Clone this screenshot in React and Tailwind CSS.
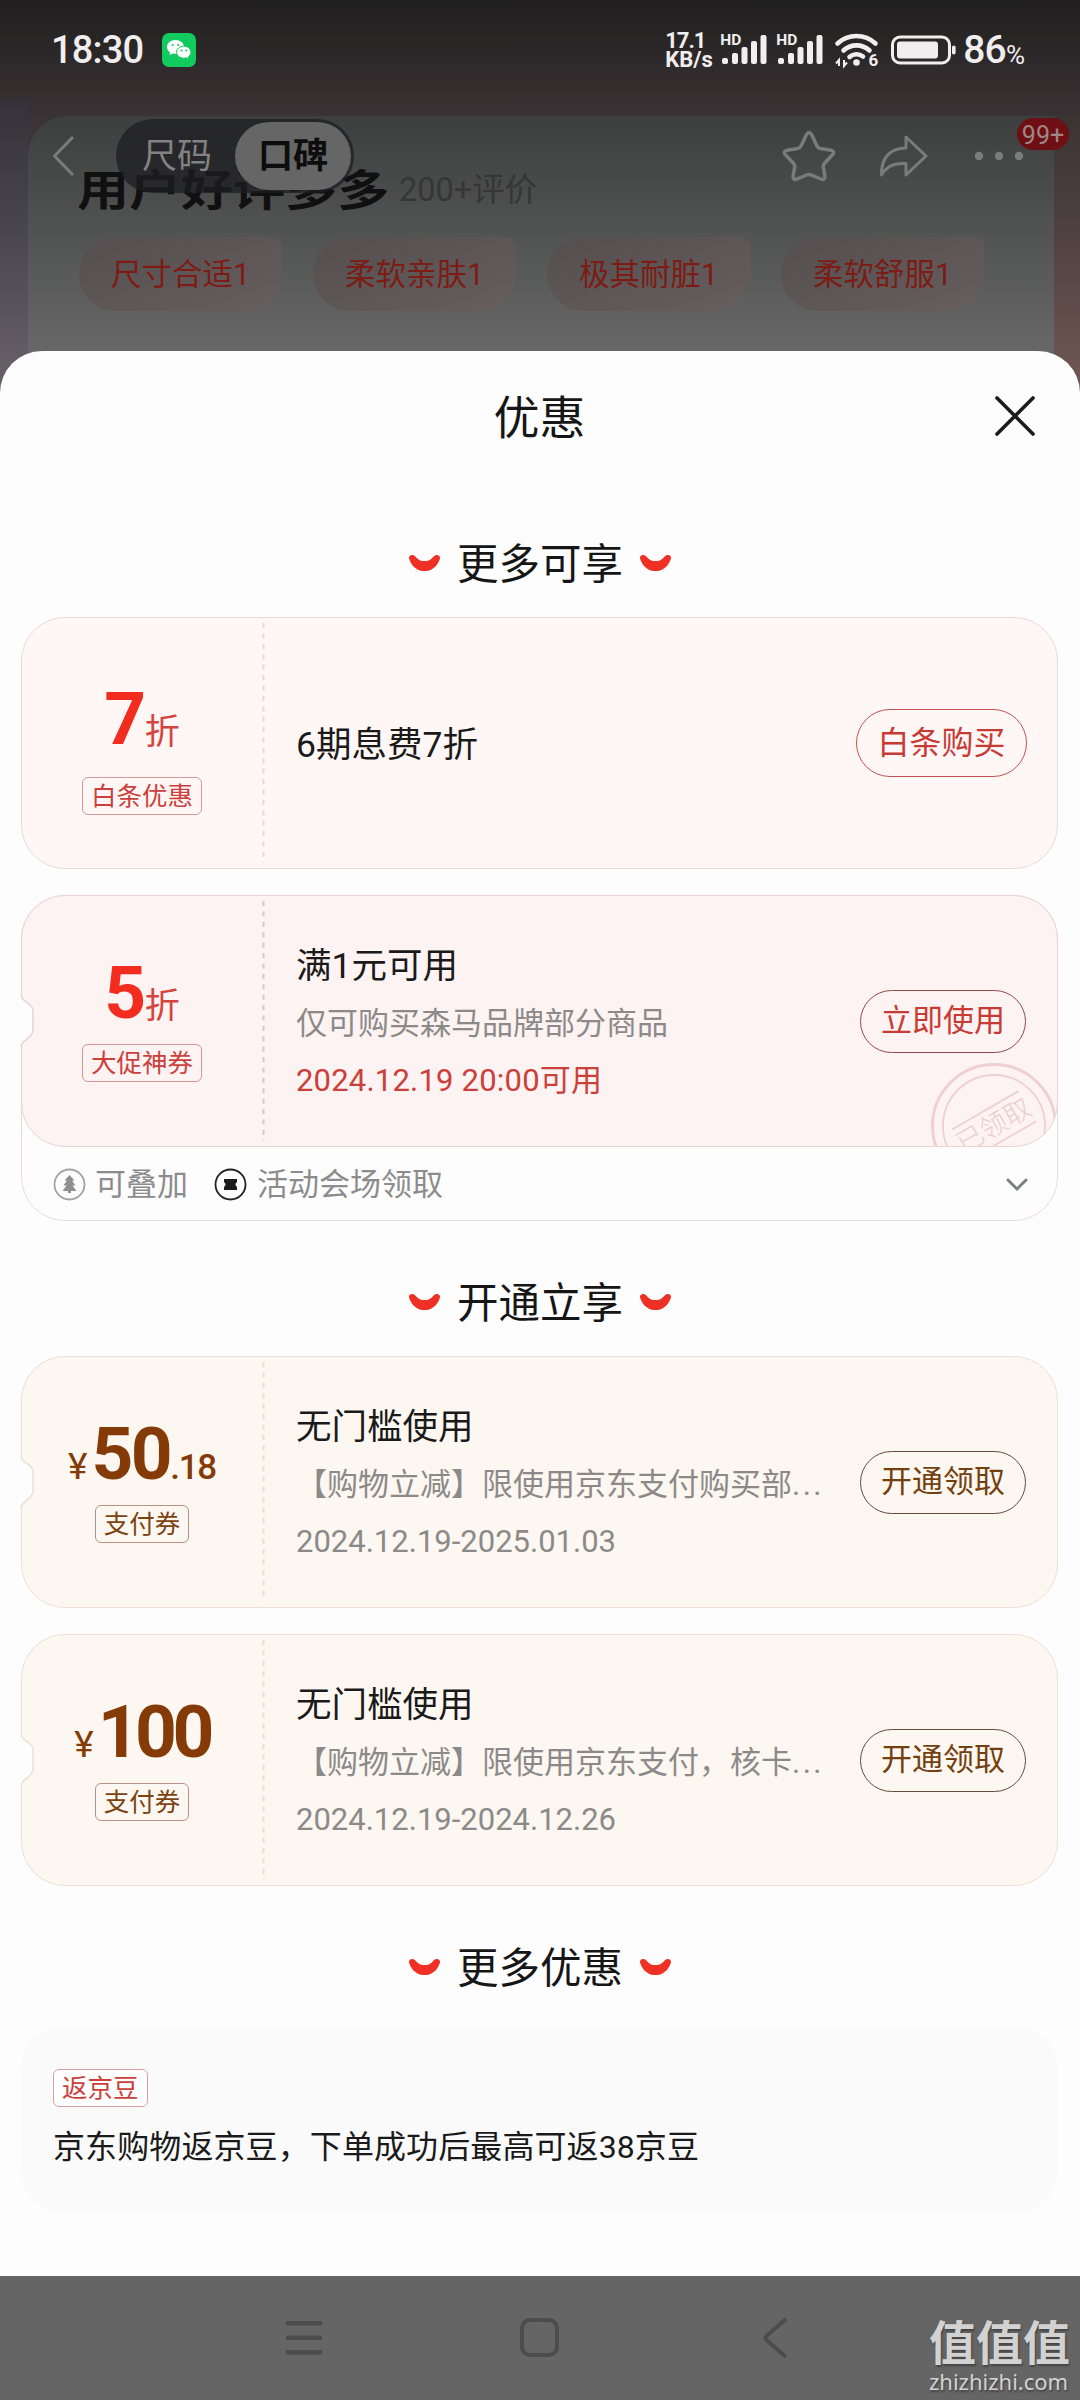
const reviewTags = ['尺寸合适1', '柔软亲肤1', '极其耐脏1', '柔软舒服1'];

const tones = {
  pink: {
    card: 'bg-[#fff6f6] border-[#ecd9d9]',
    stroke: '#e6cfd0',
    dash: 'text-[#f5d3d3]',
    price: 'text-[#f22d1f]',
    unit: 'text-[#d5443e]',
    tag: 'border-[#d49a9a] text-[#cc403b]',
    button: 'border-[#c4534f] text-[#c83a34]',
  },
  rose: {
    card: 'bg-[#fdf3f2] border-[#ead3d2]',
    stroke: '#e8d3d2',
    dash: 'text-[#e3c4c4]',
    price: 'text-[#f22d1f]',
    unit: 'text-[#d5443e]',
    tag: 'border-[#cf9796] text-[#cc403b]',
    button: 'border-[#93474a] text-[#c83a34]',
  },
  gold: {
    card: 'bg-[#fdf7f1] border-[#f0dfd0]',
    stroke: '#efe0cf',
    dash: 'text-[#f3dcc8]',
    price: 'text-[#853b08]',
    unit: 'text-[#7c430f]',
    tag: 'border-[#b89084] text-[#7c430f]',
    button: 'border-[#654a3c] text-[#74400f]',
  },
};

function Signal() {
  return (
    <div className="relative h-[34px] w-[48px]">
      <span className="absolute left-0 -top-px text-[15.500px] leading-[16px] font-bold">HD</span>
      <svg className="absolute left-[2px] top-[2px]" width="45" height="30" viewBox="0 0 45 30" fill="currentColor">
        <rect x="0" y="23" width="6" height="6" rx="2" />
        <rect x="10" y="18" width="6" height="11" rx="2" />
        <rect x="19.500" y="12" width="6" height="17" rx="2" />
        <rect x="29" y="6" width="6" height="23" rx="2" />
        <rect x="38.500" y="0" width="6" height="29" rx="2" />
      </svg>
    </div>
  );
}

function StatusBar() {
  return (
    <div className="absolute inset-x-0 top-0 h-[100px] flex items-center pl-[51px] pr-[55px] text-[#f0eeee]">
      <span className="text-[38px] leading-[40px] font-medium tracking-[-0.8px] w-[111px]">18:30</span>
      <svg width="34" height="34" viewBox="0 0 34 34">
        <rect width="34" height="34" rx="7" fill="#11cb5e" />
        <path d="M13.500 7C8.800 7 5 10.100 5 14c0 2.200 1.200 4.100 3.100 5.400L7.500 22l3-1.600c1 .3 2 .4 3 .4 4.700 0 8.500-3 8.500-6.800S18.200 7 13.500 7z" fill="#fff" />
        <path d="M21.800 13.200c-4 0-7.200 2.700-7.200 6s3.200 6 7.200 6c.9 0 1.700-.1 2.500-.4l2.600 1.400-.6-2.400c1.600-1.100 2.600-2.700 2.600-4.600 0-3.300-3.200-6-7.100-6z" fill="#fff" stroke="#11cb5e" />
        <g fill="#11cb5e">
          <circle cx="10.700" cy="12" r="1.100" />
          <circle cx="16.200" cy="12" r="1.100" />
          <circle cx="19.500" cy="17.500" r="1" />
          <circle cx="24.200" cy="17.500" r="1" />
        </g>
      </svg>
      <div className="ml-auto flex items-center">
        <div className="w-[55px] text-[22px] leading-[19px] font-bold">
          <p className="tracking-[-1px]">17.1</p>
          <p>KB/s</p>
        </div>
        <Signal />
        <div className="w-2" />
        <Signal />
        <svg className="ml-[11px] overflow-visible" width="46" height="35" viewBox="0 0 46 35" fill="none" stroke="currentColor" strokeWidth="4.600" strokeLinecap="round">
          <path d="M2.500 10.500a28 28 0 0 1 38 0" />
          <path d="M8.500 17.500a19 19 0 0 1 26 0" />
          <path d="M14.500 24a10.500 10.500 0 0 1 13.500-.5" />
          <circle cx="21.500" cy="29.500" r="2.300" fill="currentColor" strokeWidth="2" />
          <path d="M4 33v-6l-3 3.500M9 27v6l3-3.500" strokeWidth="2" strokeLinecap="butt" />
          <text x="33.500" y="33" fontSize="17" fontWeight="700" fill="currentColor" stroke="none">6</text>
        </svg>
        <svg className="ml-[9px]" width="68" height="32" viewBox="0 0 68 32" fill="none">
          <rect x="2.500" y="3" width="57" height="26" rx="7.500" stroke="currentColor" strokeWidth="3" />
          <rect x="7" y="7.500" width="41" height="17" rx="3" fill="currentColor" />
          <rect x="62" y="11.500" width="3.600" height="9" rx="1.800" fill="currentColor" />
        </svg>
        <span className="ml-[5px] text-[39px] leading-[40px] font-medium tracking-[-0.8px]">86</span>
        <span className="pt-[9px] text-[26px] leading-[30px]">%</span>
      </div>
    </div>
  );
}

function ProductPage() {
  return (
    <div className="relative h-[400px] shrink-0 bg-linear-to-b from-[#201f1f] via-[#3b3335] via-30% to-[#67555a]">
      <div className="absolute bottom-0 top-[100px] left-0 w-[28px] bg-linear-to-b from-[#353339] via-[#48444c] via-40% to-[#665f68] to-90%" />
      <div className="absolute bottom-0 top-[116px] right-0 w-[26px] bg-linear-to-b from-[#3b3332] via-[#4f4141] via-40% to-[#6d5651] to-90%" />
      <div className="absolute left-[28px] top-[116px] w-[1026px] h-[284px] rounded-tl-[40px] bg-linear-to-b from-[#3d3f3e] to-[#666666] to-80% pl-[51px]">
        <div className="flex items-start pt-[50px]">
          <h2 className="w-[320px] h-[50px] whitespace-nowrap text-[43px] leading-[50px] font-bold text-[#101010]">
            <span className="inline-block origin-left -translate-x-[2px] scale-x-[1.21]">用户好评多多</span>
          </h2>
          <span className="text-[32.500px] leading-[49px] text-[#363636]">200+评价</span>
        </div>
        <div className="mt-[21px] flex gap-[31px]">
          {reviewTags.map((tag) => (
            <div key={tag} className="w-[203px] h-[74px] rounded-l-[37px] rounded-br-[37px] rounded-tr-[10px] bg-linear-to-br from-[#544e50] to-[#675e5d] text-center text-[30.500px] leading-[75px] text-[#7c1c14]">
              {tag}
            </div>
          ))}
        </div>
      </div>

      {/* floating nav over the scrolled review card */}
      <div className="absolute inset-x-0 top-[119px] h-[74px] flex items-center pl-[51px] text-[#7b7b7b]">
        <svg width="24" height="42" viewBox="0 0 24 42" fill="none" stroke="currentColor" strokeWidth="3">
          <path d="M22 2L3.500 21 22 40" />
        </svg>
        <div className="ml-[41px] w-[238px] h-[74px] rounded-full bg-[#1d1e23]/75 flex items-center pl-[26px] pr-[3px] text-[35px]">
          <span className="w-[93px] leading-[71px] text-[#828282]">尺码</span>
          <span className="w-[116px] h-[68px] rounded-full bg-[#666666] text-center leading-[69px] font-bold text-[#0d0d0d]">口碑</span>
        </div>
        <svg className="ml-[427px]" width="56" height="54" viewBox="0 0 56 54" fill="none" stroke="currentColor" strokeWidth="3.500" strokeLinejoin="round">
          <path d="M25.500 5.500q2.500-4 5 0l5.500 11.500q1 2 3 2.400l11 1.800q4.500 1.200 1.500 4.600l-8 8.500q-1.400 1.600-1.200 3.700l1.600 9q.2 4.500-4 3l-9.600-4q-2.300-1-4.600 0l-9.600 4q-4.200 1.500-4-3l1.600-9q.2-2.100-1.200-3.700l-8-8.500q-3-3.400 1.500-4.600l11-1.800q2-.4 3-2.400z" />
        </svg>
        <svg className="ml-[42px]" width="50" height="44" viewBox="0 0 50 44" fill="none" stroke="currentColor" strokeWidth="3" strokeLinejoin="round">
          <path d="M27 3L47 22 27 41V29.500C15 29 8 32 2.500 41 2 24 11 14 27 14z" />
        </svg>
        <svg className="ml-[45px]" width="50" height="10" viewBox="0 0 50 10" fill="currentColor">
          <circle cx="5" cy="5" r="4.200" />
          <circle cx="25" cy="5" r="4.200" />
          <circle cx="45" cy="5" r="4.200" />
        </svg>
        <span className="absolute left-[1017px] -top-px w-[52px] h-[32px] rounded-full bg-[#6e1013] text-center text-[25px] leading-[35px] text-[#a08585]">99+</span>
      </div>
      <StatusBar />
    </div>
  );
}

function Smile() {
  return (
    <svg width="33" height="20" viewBox="0 0 34 20" fill="#ee3124">
      <path d="M1.200 5.800C0 2 5 0 8 3.700 12.500 9.500 21.500 9.500 26 3.700 29 0 34 2 32.800 5.800 27.500 22.500 6.500 22.500 1.200 5.800z" />
    </svg>
  );
}

function SectionTitle({ children, className }) {
  return (
    <div className={`flex items-center justify-center gap-[16px] h-[60px] pl-px ${className}`}>
      <Smile />
      <h3 className="pt-[3px] text-[41.500px] leading-[60px] text-[#161616]">{children}</h3>
      <Smile />
    </div>
  );
}

function Notch({ stroke }) {
  return (
    <svg className="absolute -left-[2px] top-[99px]" width="15" height="52" viewBox="0 0 15 52">
      <path d="M0 1h2C2 8 13 7 13 16V35C13 44 2 43 2 51H0z" fill="#fdfdfd" />
      <path d="M1.200 0C1.200 8 13 7 13 16V35C13 44 1.200 44 1.200 52" fill="none" stroke={stroke} strokeWidth="1.500" />
    </svg>
  );
}

function Stamp() {
  return (
    <div className="absolute inset-0 rounded-[42px] overflow-hidden">
      <svg className="absolute left-[907px] top-[165px]" width="130" height="130" viewBox="0 0 130 130" fill="none" stroke="#efd0d1">
        <circle cx="65" cy="65" r="61.500" strokeWidth="3" />
        <circle cx="65" cy="65" r="51" strokeWidth="1.800" />
        <g transform="rotate(-30 65 65)">
          <path d="M27 47h77M27 82h77" strokeWidth="1.800" />
          <text x="65" y="74" textAnchor="middle" fontSize="27" fontWeight="300" fill="#eccdce" stroke="none">已领取</text>
        </g>
      </svg>
    </div>
  );
}

function Coupon({ tone, prefix, amount, unit, cents, tag, title, desc, clipped, date, dateClass = 'text-[#8c8a89]', action, notch, stamp, wide, className = '' }) {
  const t = tones[tone];
  return (
    <div className={`relative h-[252px] rounded-[44px] border-[1.500px] flex ${t.card} ${className}`}>
      {notch && <Notch stroke={t.stroke} />}
      {stamp && <Stamp />}
      <div className={`w-[240px] shrink-0 flex flex-col items-center ${wide ? 'pt-[70px]' : 'pt-[66px]'}`}>
        <div className={`flex items-baseline h-[62px] leading-[62px] ${t.price}`}>
          {prefix && <span className="text-[37px] mr-[4px]">{prefix}</span>}
          <span className={`text-[73px] font-bold ${amount.length > 2 ? 'tracking-[-4.500px]' : 'tracking-[-2.500px]'}`}>{amount}</span>
          {unit && <span className={`text-[35px] ml-[1px] ${t.unit}`}>{unit}</span>}
          {cents && <span className="text-[35px] tracking-[-1.2px] font-medium">{cents}</span>}
        </div>
        <span className={`h-[38px] rounded-[6px] border-[1.500px] px-[8px] text-[25.500px] leading-[36px] ${wide ? 'mt-[27px]' : 'mt-[20px]'} ${t.tag}`}>{tag}</span>
      </div>
      <svg className={`shrink-0 my-[5px] ${t.dash}`} width="3" height="240" viewBox="0 0 3 240">
        <path d="M1.500 0V240" stroke="currentColor" strokeWidth="2" strokeDasharray="5.200 5.200" />
      </svg>
      <div className="ml-[31px] pt-[4px] flex-1 min-w-0 flex flex-col justify-center whitespace-nowrap">
        <p className="text-[35.500px] leading-[58px] text-[#1a1a1a]">{title}</p>
        {desc && (
          <p className="text-[31px] leading-[58px] text-[#8c8a89]">
            {desc}
            {clipped && <span className="tracking-[2.500px]">...</span>}
          </p>
        )}
        {date && <p className={`text-[31px] leading-[56px] ${dateClass}`}>{date}</p>}
      </div>
      <div className={`self-center shrink-0 rounded-full border-[1.500px] text-center ${t.button} ${wide ? 'w-[171px] h-[68px] mr-[30px] text-[32px] leading-[66px]' : 'w-[166px] h-[63px] mr-[31px] text-[31px] leading-[60px]'}`}>
        {action}
      </div>
    </div>
  );
}

function CouponFooter() {
  return (
    <div className="h-[73px] flex items-center pt-[4px] pl-[31px] pr-[28px] text-[31px] leading-[46px] text-[#8c8c8c]">
      <svg width="33" height="33" viewBox="0 0 33 33" fill="none">
        <circle cx="16.500" cy="16.500" r="15" stroke="#a3a3a3" strokeWidth="1.800" />
        <path d="M16.500 7l5 5.500h-2.500l3.500 5h-3l4 5.500H18v2h-3v-2H9.500l4-5.500h-3l3.500-5h-2.500z" fill="#8f8f8f" />
      </svg>
      <span className="ml-[9px]">可叠加</span>
      <svg className="ml-[26px]" width="33" height="33" viewBox="0 0 33 33" fill="none">
        <circle cx="16.500" cy="16.500" r="15" stroke="#222" strokeWidth="1.800" />
        <path d="M10 11h13v3q-3 2.500 0 5v3H10v-3q3-2.500 0-5z" fill="#1c1c1c" />
      </svg>
      <span className="ml-[10px]">活动会场领取</span>
      <svg className="ml-auto" width="24" height="14" viewBox="0 0 24 14" fill="none" stroke="#7d7f80" strokeWidth="3" strokeLinecap="round">
        <path d="M3 2l9 9 9-9" />
      </svg>
    </div>
  );
}

function NavBar() {
  return (
    <div className="relative h-[124px] shrink-0 bg-[#656565] text-[#4c4c4c]">
      <div className="flex items-center pt-[40px] pl-[284px]">
        <svg width="40" height="44" viewBox="0 0 40 44" fill="currentColor">
          <rect x="2" y="5" width="36" height="4.500" rx="1" />
          <rect x="2" y="19.500" width="36" height="4.500" rx="1" />
          <rect x="2" y="34" width="36" height="4.500" rx="1" />
        </svg>
        <svg className="ml-[194px]" width="44" height="44" viewBox="0 0 44 44" fill="none" stroke="currentColor" strokeWidth="4">
          <rect x="4" y="4" width="35" height="35" rx="8" />
        </svg>
        <svg className="ml-[198px]" width="30" height="44" viewBox="0 0 30 44" fill="none" stroke="currentColor" strokeWidth="4">
          <path d="M26 3L6.500 20q-2 2 0 4L26 41" />
        </svg>
      </div>
      <div className="absolute left-[929px] top-[41px] w-[146px] whitespace-nowrap text-[#d2d2d2] [text-shadow:1px_2px_2px_#444]">
        <p className="text-[47px] leading-[54px] font-bold">值值值</p>
        <p className="text-[22px] leading-[21px] font-['Noto_Sans']">zhizhizhi.com</p>
      </div>
    </div>
  );
}

export default function App() {
  return (
    <div className="w-[1080px] h-[2400px] overflow-hidden flex flex-col bg-[#656565] font-['Roboto','Noto_Sans_CJK_SC',sans-serif]">
      <ProductPage />
      <main className="relative -mt-[49px] h-[1925px] shrink-0 rounded-t-[42px] bg-[#fdfdfd] pl-[21px] pr-[22px]">
        <header className="relative h-[130px] flex items-center justify-center">
          <h1 className="pt-[4px] text-[46px] leading-[60px] text-[#161616]">优惠</h1>
          <svg className="absolute right-[22px] top-[44px]" width="42" height="42" viewBox="0 0 42 42" stroke="#1b1b1b" strokeWidth="3.600" strokeLinecap="round">
            <path d="M3 3l36 36M39 3L3 39" />
          </svg>
        </header>

        <SectionTitle className="mt-[52px]">更多可享</SectionTitle>
        <Coupon className="mt-[24px]" tone="pink" amount="7" unit="折" tag="白条优惠" title="6期息费7折" action="白条购买" wide />
        <div className="mt-[26px] h-[326px] rounded-[44px] border-[1.500px] border-[#eadcdc]">
          <Coupon
            className="-m-px"
            tone="rose"
            amount="5"
            unit="折"
            tag="大促神券"
            title="满1元可用"
            desc="仅可购买森马品牌部分商品"
            date="2024.12.19 20:00可用"
            dateClass="text-[#cc403b] tracking-[0.2px]"
            action="立即使用"
            notch
            stamp
          />
          <CouponFooter />
        </div>

        <SectionTitle className="mt-[51px]">开通立享</SectionTitle>
        <Coupon
          className="mt-[24px]"
          tone="gold"
          prefix="¥"
          amount="50"
          cents=".18"
          tag="支付券"
          title="无门槛使用"
          desc="【购物立减】限使用京东支付购买部"
          date="2024.12.19-2025.01.03"
          action="开通领取"
          clipped
          notch
        />
        <Coupon
          className="mt-[26px]"
          tone="gold"
          prefix="¥"
          amount="100"
          tag="支付券"
          title="无门槛使用"
          desc="【购物立减】限使用京东支付，核卡"
          date="2024.12.19-2024.12.26"
          action="开通领取"
          clipped
          notch
        />

        <SectionTitle className="mt-[51px]">更多优惠</SectionTitle>
        <div className="mt-[30px] h-[185px] rounded-[42px] bg-[#fafafa] pl-[32px] pt-[42px] flex flex-col items-start">
          <span className="h-[38px] rounded-[6px] border-[1.500px] border-[#d5a09f] bg-white px-[8px] text-[25.500px] leading-[36px] text-[#cc403b]">返京豆</span>
          <p className="mt-[15px] text-[32px] leading-[50px] tracking-[0.1px] text-[#1a1a1a]">京东购物返京豆，下单成功后最高可返38京豆</p>
        </div>
      </main>
      <NavBar />
    </div>
  );
}
